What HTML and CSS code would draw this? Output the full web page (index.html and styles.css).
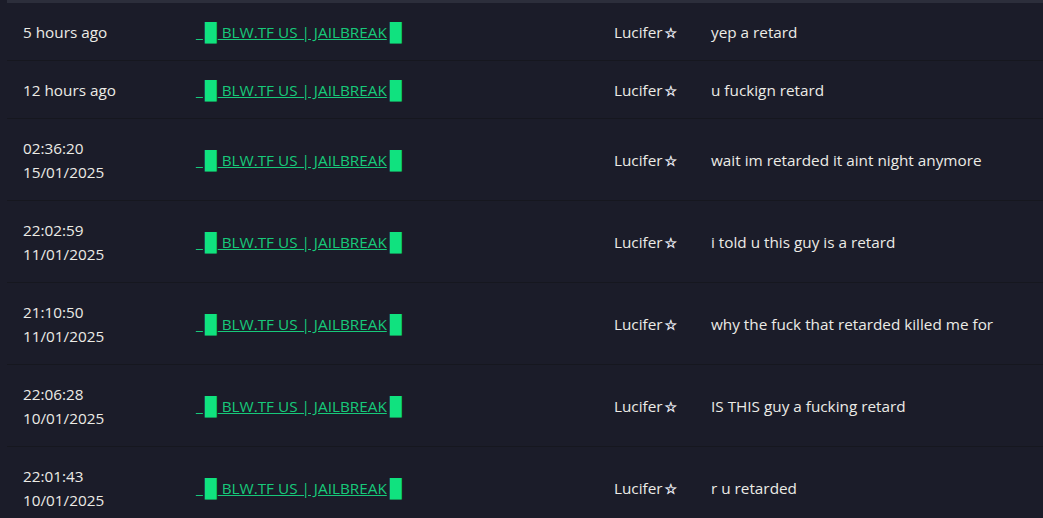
FILE: index.html
```html
<!DOCTYPE html>
<html lang="en">
<head>
    <meta charset="UTF-8">
    <meta name="viewport" content="width=device-width, initial-scale=1.0">
    <title>Messages</title>
    <link rel="stylesheet" href="styles.css">
</head>
<body>
    <div class="container">
        <table class="log-table">
            <colgroup>
                <col class="col-time">
                <col class="col-server">
                <col class="col-user">
                <col>
            </colgroup>
            <tbody>
                <tr>
                    <td>5 hours ago</td>
                    <td><a class="server" href="#">_<span class="blk">█</span> BLW.TF US | JAILBREAK<span class="blk end">█</span></a></td>
                    <td>Lucifer<span class="star">☆</span></td>
                    <td>yep a retard</td>
                </tr>
                <tr>
                    <td>12 hours ago</td>
                    <td><a class="server" href="#">_<span class="blk">█</span> BLW.TF US | JAILBREAK<span class="blk end">█</span></a></td>
                    <td>Lucifer<span class="star">☆</span></td>
                    <td>u fuckign retard</td>
                </tr>
                <tr>
                    <td>02:36:20<br>15/01/2025</td>
                    <td><a class="server" href="#">_<span class="blk">█</span> BLW.TF US | JAILBREAK<span class="blk end">█</span></a></td>
                    <td>Lucifer<span class="star">☆</span></td>
                    <td>wait im retarded it aint night anymore</td>
                </tr>
                <tr>
                    <td>22:02:59<br>11/01/2025</td>
                    <td><a class="server" href="#">_<span class="blk">█</span> BLW.TF US | JAILBREAK<span class="blk end">█</span></a></td>
                    <td>Lucifer<span class="star">☆</span></td>
                    <td>i told u this guy is a retard</td>
                </tr>
                <tr>
                    <td>21:10:50<br>11/01/2025</td>
                    <td><a class="server" href="#">_<span class="blk">█</span> BLW.TF US | JAILBREAK<span class="blk end">█</span></a></td>
                    <td>Lucifer<span class="star">☆</span></td>
                    <td>why the fuck that retarded killed me for</td>
                </tr>
                <tr>
                    <td>22:06:28<br>10/01/2025</td>
                    <td><a class="server" href="#">_<span class="blk">█</span> BLW.TF US | JAILBREAK<span class="blk end">█</span></a></td>
                    <td>Lucifer<span class="star">☆</span></td>
                    <td>IS THIS guy a fucking retard</td>
                </tr>
                <tr>
                    <td>22:01:43<br>10/01/2025</td>
                    <td><a class="server" href="#">_<span class="blk">█</span> BLW.TF US | JAILBREAK<span class="blk end">█</span></a></td>
                    <td>Lucifer<span class="star">☆</span></td>
                    <td>r u retarded</td>
                </tr>
            </tbody>
        </table>
    </div>
</body>
</html>
```

FILE: styles.css
```css
* {
    margin: 0;
    padding: 0;
    box-sizing: border-box;
}
body {
    font-family: "Open Sans", "DejaVu Sans", sans-serif;
    font-size: 15.3px;
    line-height: 24px;
    background-color: #1b1c29;
    color: #ecebe6;
}
.container {
    padding-left: 7px;
}
.log-table {
    width: 1036px;
    border-collapse: collapse;
    table-layout: fixed;
    border-top: 3px solid #2c2e3b;
}
.col-time { width: 173px; }
.col-server { width: 418px; }
.col-user { width: 97px; }
.log-table td {
    padding: 17px 16px 16px;
    border-bottom: 1px solid #16171f;
    vertical-align: middle;
    white-space: nowrap;
}
.server {
    color: #17c97a;
    text-decoration: underline;
}
.blk {
    display: inline-block;
    color: #10e27f;
    font-family: "DejaVu Sans", sans-serif;
    font-size: 18px;
    line-height: 0;
    width: 12px;
    margin: 0 1px 0 2px;
    vertical-align: -1px;
    transform: scaleX(0.84);
    transform-origin: left center;
}
.blk.end {
    margin: 0 0 0 3px;
}
.star {
    font-family: "DejaVu Sans", sans-serif;
    font-size: 14px;
    line-height: 0;
    margin-left: 2px;
    color: #e6e6ee;
    -webkit-text-stroke: 0.5px #e6e6ee;
}
```
